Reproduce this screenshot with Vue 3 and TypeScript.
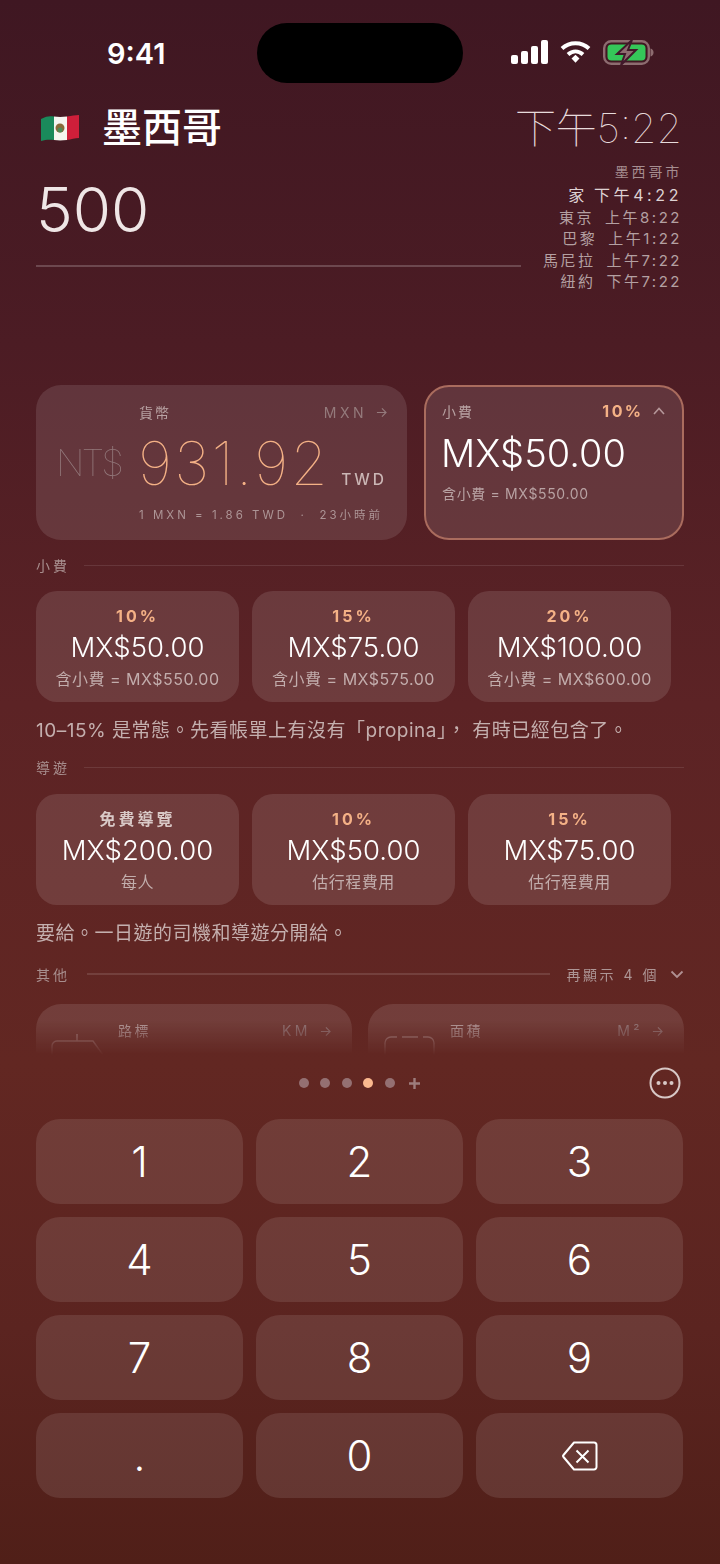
<script setup lang="ts">
interface Tip { label: string; amount: string; sub: string }
const clocks = [
  { city: '家', time: '下午4:22' },
  { city: '東京', time: '上午8:22' },
  { city: '巴黎', time: '上午1:22' },
  { city: '馬尼拉', time: '上午7:22' },
  { city: '紐約', time: '下午7:22' },
]
const tips: Tip[] = [
  { label: '10%', amount: 'MX$50.00', sub: '含小費 = MX$550.00' },
  { label: '15%', amount: 'MX$75.00', sub: '含小費 = MX$575.00' },
  { label: '20%', amount: 'MX$100.00', sub: '含小費 = MX$600.00' },
]
const guides: Tip[] = [
  { label: '免費導覽', amount: 'MX$200.00', sub: '每人' },
  { label: '10%', amount: 'MX$50.00', sub: '估行程費用' },
  { label: '15%', amount: 'MX$75.00', sub: '估行程費用' },
]
const keys = ['1', '2', '3', '4', '5', '6', '7', '8', '9', '.', '0']
const dots = [0, 1, 2, 3, 4]
</script>

<template>
  <div class="phone">
    <div class="status">
      <span class="clock">9:41</span>
      <div class="island"></div>
      <div class="status-icons">
        <svg width="37" height="24" viewBox="0 0 37 24">
          <rect x="0" y="15" width="7" height="9" rx="2" fill="#fff" />
          <rect x="10" y="11" width="7" height="13" rx="2" fill="#fff" />
          <rect x="20" y="6" width="7" height="18" rx="2" fill="#fff" />
          <rect x="30" y="0" width="7" height="24" rx="2" fill="#fff" />
        </svg>
        <svg width="31" height="24" viewBox="0 0 31 24" fill="none">
          <path d="M2 8.500C9.500 1.500 21.500 1.500 29 8.500" stroke="#fff" stroke-width="4" />
          <path d="M8 14.500C12.500 10.500 18.500 10.500 23 14.500" stroke="#fff" stroke-width="4" />
          <path d="M11.500 18.500L15.500 14.800L19.500 18.500L15.500 22.800Z" fill="#fff" />
        </svg>
        <svg width="51" height="25" viewBox="0 0 51 25" fill="none">
          <rect x="1.200" y="1.200" width="44.600" height="22.600" rx="7" stroke="#8d6c70" stroke-width="2.400" />
          <rect x="4.500" y="4.500" width="38" height="16" rx="4" fill="#35c759" />
          <path d="M47.500 8.500c2 .5 3 2 3 4s-1 3.500-3 4z" fill="#8d6c70" />
          <path d="M29 0L14 14h8l-4 11 15-15h-8z" fill="#8d6c70" stroke="#41182a" stroke-width="2" />
        </svg>
      </div>
    </div>

    <header class="head">
      <div class="head-left">
        <div class="title-row">
          <svg class="flag" width="40" height="30" viewBox="0 0 40 30">
            <path d="M1 6C7 3 9 3 14 3.500L14 27C9 26.500 6 26.500 1 28Z" fill="#1a8a5b" />
            <path d="M14 3.500C18 4 22 4 27 3.500L27 27C22 27.500 18 27.500 14 27Z" fill="#f5f5f0" />
            <path d="M27 3.500C32 3 35 2 39 2L39 25C35 25 31 26.500 27 27Z" fill="#cf1f3a" />
            <circle cx="20" cy="15" r="4.500" fill="#8a6a3a" />
            <circle cx="20" cy="17" r="2.500" fill="#4f8a5a" />
          </svg>
          <h1 class="country">墨西哥</h1>
        </div>
        <div class="input">500</div>
        <div class="input-rule"></div>
      </div>
      <div class="head-right">
        <div class="local-time">下午5:22</div>
        <div class="local-city">墨西哥市</div>
        <div v-for="(c, i) in clocks" :key="c.city" class="world" :class="{ home: i === 0 }">
          <span>{{ c.city }}</span><span>{{ c.time }}</span>
        </div>
      </div>
    </header>

    <main class="scroll">
      <div class="top-cards">
        <section class="card currency">
          <div class="symbol">NT$</div>
          <div class="currency-body">
            <div class="card-head">
              <span class="card-name">貨幣</span>
              <span class="card-unit">MXN
                <svg width="11" height="11" viewBox="0 0 12 12" fill="none"><path d="M1 6h10M6.500 1.500L11 6l-4.500 4.500" stroke="currentColor" stroke-width="1.200" /></svg>
              </span>
            </div>
            <div class="value-row">
              <span class="value">931.92</span>
              <span class="value-code">TWD</span>
            </div>
            <div class="rate">1 MXN = 1.86 TWD &nbsp;·&nbsp; 23小時前</div>
          </div>
        </section>
        <section class="card tip-card">
          <div class="card-head">
            <span class="card-name">小費</span>
            <span class="tip-pct">10%
              <svg width="12" height="8" viewBox="0 0 12 8" fill="none"><path d="M1 7l5-5.500L11 7" stroke="#b5979a" stroke-width="1.600" /></svg>
            </span>
          </div>
          <div class="tip-amount">MX$50.00</div>
          <div class="tip-total">含小費 = MX$550.00</div>
        </section>
      </div>

      <div class="section-label first"><span>小費</span><i></i></div>
      <div class="options first-options">
        <div v-for="t in tips" :key="t.amount" class="option">
          <div class="opt-label">{{ t.label }}</div>
          <div class="opt-amount">{{ t.amount }}</div>
          <div class="opt-sub">{{ t.sub }}</div>
        </div>
      </div>
      <p class="note">10–15% 是常態。先看帳單上有沒有「propina」， 有時已經包含了。</p>

      <div class="section-label"><span>導遊</span><i></i></div>
      <div class="options">
        <div v-for="(t, i) in guides" :key="t.amount" class="option">
          <div class="opt-label" :class="{ plain: i === 0 }">{{ t.label }}</div>
          <div class="opt-amount">{{ t.amount }}</div>
          <div class="opt-sub">{{ t.sub }}</div>
        </div>
      </div>
      <p class="note">要給。一日遊的司機和導遊分開給。</p>

      <div class="section-label other">
        <span>其他</span><i></i>
        <span class="more">再顯示 4 個</span>
        <svg width="14" height="9" viewBox="0 0 14 9" fill="none"><path d="M1.500 1.500L7 7l5.500-5.500" stroke="#b09092" stroke-width="1.800" /></svg>
      </div>
      <div class="mini-cards">
        <div class="mini">
          <svg class="mini-icon" width="56" height="60" viewBox="0 0 56 60" fill="none" stroke="#a98a8a" stroke-width="1.400">
            <path d="M28 0v7M3 60V12a5 5 0 0 1 5-5h36l10 14v39" />
          </svg>
          <span class="mini-name">路標</span>
          <span class="card-unit">KM
            <svg width="11" height="11" viewBox="0 0 12 12" fill="none"><path d="M1 6h10M6.500 1.500L11 6l-4.500 4.500" stroke="currentColor" stroke-width="1.200" /></svg>
          </span>
        </div>
        <div class="mini">
          <svg class="mini-icon" width="56" height="60" viewBox="0 0 56 60" fill="none" stroke="#a98a8a" stroke-width="1.400">
            <path d="M4 60V9a6 6 0 0 1 6-6h6M21 3h16M42 3h5a6 6 0 0 1 6 6v51" />
          </svg>
          <span class="mini-name">面積</span>
          <span class="card-unit">M²
            <svg width="11" height="11" viewBox="0 0 12 12" fill="none"><path d="M1 6h10M6.500 1.500L11 6l-4.500 4.500" stroke="currentColor" stroke-width="1.200" /></svg>
          </span>
        </div>
      </div>
    </main>

    <div class="pager">
      <div class="dots">
        <span v-for="d in dots" :key="d" class="dot" :class="{ on: d === 3 }"></span>
        <svg class="plus" width="13" height="13" viewBox="0 0 13 13"><path d="M6.500 1v11M1 6.500h11" stroke="#9d7d7d" stroke-width="2.400" /></svg>
      </div>
      <svg class="menu" width="32" height="32" viewBox="0 0 32 32" fill="none">
        <circle cx="16" cy="16" r="14.500" stroke="#d8c8c6" stroke-width="2" />
        <circle cx="9.500" cy="16" r="2" fill="#d8c8c6" />
        <circle cx="16" cy="16" r="2" fill="#d8c8c6" />
        <circle cx="22.500" cy="16" r="2" fill="#d8c8c6" />
      </svg>
    </div>

    <div class="keypad">
      <button v-for="k in keys" :key="k" class="key" type="button">{{ k }}</button>
      <button class="key" type="button" aria-label="刪除">
        <svg width="36" height="30" viewBox="0 0 36 30" fill="none" stroke="#fff" stroke-width="2" stroke-linejoin="round">
          <path d="M12 1.500h20a2.500 2.500 0 0 1 2.500 2.500v22a2.500 2.500 0 0 1-2.500 2.500H12L1.500 16a1.500 1.500 0 0 1 0-2Z" />
          <path d="M14.500 9.500l12 12M26.500 9.500l-12 12" />
        </svg>
      </button>
    </div>
  </div>
</template>

<style>
html, body { margin: 0; background: #4f1f1a; }
</style>

<style scoped>
.phone {
  width: 720px;
  height: 1564px;
  overflow: hidden;
  background: linear-gradient(180deg, #3f1722 0%, #4c1c24 22%, #5c2325 45%, #622722 68%, #5b2420 85%, #501f18 100%);
  font-family: Inter, "Noto Sans CJK TC", sans-serif;
  color: #fff;
}
.status {
  height: 106px;
  box-sizing: border-box;
  padding-top: 23px;
  display: grid;
  grid-template-columns: 257px 206px 257px;
}
.clock {
  justify-self: start;
  margin-left: 107px;
  margin-top: 13px;
  font-size: 29px;
  line-height: 36px;
  font-weight: 600;
}
.island { height: 60px; border-radius: 30px; background: #000; }
.status-icons {
  display: flex;
  align-items: center;
  height: 60px;
  padding-left: 48px;
  margin-top: -1px;
  gap: 12px;
}
.head {
  display: flex;
  justify-content: space-between;
  padding: 0 38px 0 36px;
  height: 279px;
  box-sizing: border-box;
}
.head-left { flex: none; width: 485px; margin-right: -40px; }
.title-row { display: flex; align-items: center; height: 44px; gap: 22px; margin-left: 4px; }
.flag { flex: none; }
.country { margin: 0; font-size: 40px; line-height: 44px; font-weight: 500; color: #fff; }
.input {
  margin-top: 22px;
  font-size: 62px;
  line-height: 76px;
  font-weight: 300;
  color: #efe6e6;
}
.input-rule { height: 2px; margin-top: 17px; background: rgba(255, 255, 255, 0.2); }
.head-right { flex: none; text-align: right; white-space: nowrap; }
.local-time {
  font-size: 41px;
  line-height: 44px;
  font-weight: 100;
  color: #e7dbdc;
}
.local-city {
  margin-top: 11px;
  font-size: 14px;
  line-height: 22px;
  letter-spacing: 2.800px;
  color: #a68d90;
}
.world {
  display: flex;
  justify-content: flex-end;
  gap: 11px;
  font-size: 15px;
  line-height: 21.500px;
  letter-spacing: 2.500px;
  color: #b4a0a2;
}
.world.home { color: #ded2d3; margin-top: 2px; font-size: 16px; letter-spacing: 3.600px; gap: 6px; }

.scroll {
  height: 670px;
  box-sizing: border-box;
  padding: 0 36px;
  -webkit-mask-image: linear-gradient(180deg, #000 0, #000 635px, transparent 670px);
  mask-image: linear-gradient(180deg, #000 0, #000 635px, transparent 670px);
}
.top-cards { display: grid; grid-template-columns: 371px 259.500px; gap: 17px; }
.card {
  height: 155px;
  box-sizing: border-box;
  border-radius: 25px;
  background: rgba(255, 255, 255, 0.11);
}
.currency { display: flex; padding: 16px 20px 0 20px; }
.symbol {
  width: 83px;
  flex: none;
  margin-top: 40px;
  font-size: 37px;
  line-height: 44px;
  font-weight: 100;
  color: #93787b;
  letter-spacing: -3px;
}
.currency-body { flex: 1; min-width: 0; }
.card-head { display: flex; justify-content: space-between; align-items: center; height: 22px; }
.card-name { font-size: 14px; letter-spacing: 2px; color: #b8a2a3; }
.card-unit {
  font-size: 14px;
  letter-spacing: 3.500px;
  color: #947a7c;
  display: inline-flex;
  align-items: center;
  gap: 9px;
}
.value-row { display: flex; align-items: baseline; margin-top: 8px; }
.value {
  font-size: 60px;
  line-height: 64px;
  font-weight: 100;
  letter-spacing: 2.400px;
  margin-left: -1px;
  color: #f4b186;
}
.value-code {
  margin-left: 11px;
  font-size: 15.500px;
  letter-spacing: 3px;
  font-weight: 500;
  color: #cbb6b5;
}
.rate {
  margin-top: 10px;
  white-space: nowrap;
  font-size: 11.500px;
  line-height: 20px;
  letter-spacing: 3px;
  color: #ad9596;
}
.tip-card {
  padding: 13px 17px 0 16px;
  border: 2px solid #aa6c5e;
}
.tip-pct {
  display: inline-flex;
  align-items: center;
  gap: 9px;
  font-size: 16px;
  font-weight: 700;
  letter-spacing: 2.400px;
  color: #f4b186;
}
.tip-amount {
  margin-top: 8px;
  margin-left: -1px;
  font-size: 38px;
  line-height: 46px;
  font-weight: 300;
  color: #fff;
}
.tip-total {
  margin-top: 8px;
  font-size: 14px;
  line-height: 20px;
  letter-spacing: 0.650px;
  color: #b8a2a3;
}

.section-label {
  display: flex;
  align-items: center;
  height: 20px;
  margin-top: 14px;
  font-size: 14px;
  letter-spacing: 3px;
  color: #a88e8e;
}
.section-label.first { margin-top: 15px; }
.section-label i { flex: 1; height: 1px; margin-left: 14px; background: rgba(255, 255, 255, 0.1); }
.section-label.other { margin-top: 18px; }
.section-label.other i { height: 2px; margin-left: 17px; background: rgba(255, 255, 255, 0.12); }
.more { margin: 0 11px 0 17px; letter-spacing: 2.500px; word-spacing: 1px; color: #ad9595; }

.options {
  display: grid;
  grid-template-columns: repeat(3, 203px);
  gap: 13px;
  margin-top: 17px;
}
.first-options { margin-top: 16px; }
.option {
  height: 111px;
  box-sizing: border-box;
  padding-top: 14px;
  border-radius: 21px;
  background: rgba(255, 255, 255, 0.115);
  text-align: center;
}
.opt-label {
  font-size: 16px;
  line-height: 22px;
  font-weight: 700;
  letter-spacing: 3px;
  color: #f4b186;
}
.opt-label.plain { color: #d9c9c7; }
.opt-amount {
  margin-top: 3px;
  font-size: 27.500px;
  line-height: 34px;
  font-weight: 300;
  color: #fff;
}
.opt-sub {
  margin-top: 4px;
  font-size: 16px;
  line-height: 22px;
  letter-spacing: 0.500px;
  color: #c2adac;
}
.note {
  margin: 16px 0 0;
  font-size: 19px;
  line-height: 25px;
  letter-spacing: 0.500px;
  color: #c4afae;
  white-space: nowrap;
}
.mini-cards { display: grid; grid-template-columns: 316px 316px; gap: 16px; margin-top: 20px; }
.mini {
  position: relative;
  height: 120px;
  box-sizing: border-box;
  padding: 17px 21px 0 82px;
  border-radius: 25px;
  background: rgba(255, 255, 255, 0.11);
  display: flex;
  justify-content: space-between;
  align-items: flex-start;
}
.mini-name { font-size: 14px; line-height: 20px; letter-spacing: 2.500px; color: #b8a2a3; }
.mini .card-unit { line-height: 20px; }
.mini-icon { position: absolute; left: 13px; top: 30px; }

.pager {
  position: relative;
  height: 56px;
  display: flex;
  justify-content: center;
  align-items: center;
}
.dots { display: flex; align-items: center; gap: 11.400px; }
.dot { width: 10px; height: 10px; border-radius: 50%; background: #947072; }
.dot.on { background: #fbb98f; }
.plus { margin-left: 2px; }
.menu { position: absolute; right: 39px; top: 12px; }

.keypad {
  display: grid;
  grid-template-columns: repeat(3, 207px);
  grid-auto-rows: 85px;
  gap: 13px;
  margin-top: 8px;
  padding: 0 36px;
}
.key {
  display: flex;
  align-items: center;
  justify-content: center;
  border: 0;
  padding: 0;
  border-radius: 24px;
  background: rgba(255, 255, 255, 0.1);
  font-family: Inter, sans-serif;
  font-size: 42px;
  font-weight: 300;
  color: #fff;
}
</style>
